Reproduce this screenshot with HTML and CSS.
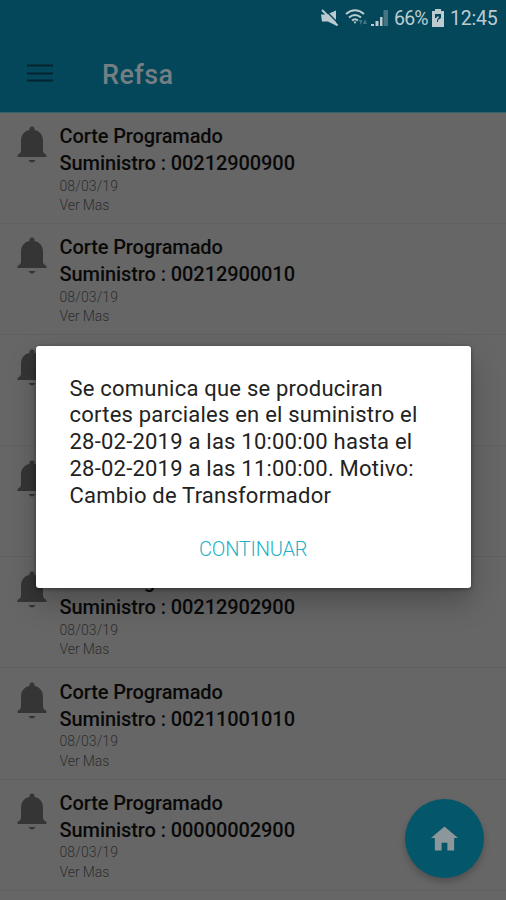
FILE: index.html
```html
<!DOCTYPE html>
<html lang="es">
<head>
<meta charset="utf-8">
<title>Refsa</title>
<link rel="stylesheet" href="styles.css">
</head>
<body>
<svg class="defs" width="0" height="0"><symbol id="bell" viewBox="0 0 30 37"><path d="M15 .5a2.500 2.500 0 0 0-2.500 2.500v1C7 5 4 9.500 4 15v9.500c0 2-1 3-3.500 4.500v2h29v-2C27 27.500 26 26.500 26 24.500V15c0-5.500-3-10-8.500-11V3A2.500 2.500 0 0 0 15 .5zM11.500 34h7q-1.500 2.500-3.500 2.500t-3.500-2.500z"/></symbol></svg>
<div class="screen">
  <header class="header">
    <div class="status">
      <svg class="mute" viewBox="0 0 18 18"><path d="M0 5.500h6l9-4v15l-8-4H1z"/><path class="cut" d="M3 0l16 16"/><path class="slash" d="M1 1l15.500 15.500"/></svg>
      <svg class="wifi" viewBox="0 0 24 18"><path class="arc" d="M1 5q9-7.500 18 0M4 8.500q6-5 12 0M7 11.500q3-2.500 6 0"/><path d="M8.500 12.500h3L10 15z"/><path class="dim" d="M14 11h3.500l-1.750 5zM18 15l2-5 2 5z"/></svg>
      <svg class="signal" viewBox="0 0 18 18"><path d="M1 15h3v2H1zM5.500 12h3v5h-3z"/><path d="M10 8h2.500v9H10z"/><path class="dim" d="M13.500 1H18v16h-4.500z"/></svg>
      <span class="percent">66%</span>
      <svg class="battery" viewBox="0 0 12 18"><path d="M3 0h6v2h3v16H0V2h3z"/><path class="plug" d="M3 5h6v4l-3 2v2H5v-2l2-3-1-1-2 2H3z"/></svg>
      <span class="clock">12:45</span>
    </div>
    <div class="toolbar">
      <svg class="menu" viewBox="0 0 26 18"><path d="M0 1.500h26M0 9.500h26M0 16.500h26"/></svg>
      <h1>Refsa</h1>
    </div>
  </header>
  <main class="list">
    <article class="row"><svg class="bell"><use href="#bell"/></svg><div><h2>Corte Programado</h2><h3>Suministro : 00212900900</h3><p>08/03/19</p><p>Ver Mas</p></div></article>
    <article class="row"><svg class="bell"><use href="#bell"/></svg><div><h2>Corte Programado</h2><h3>Suministro : 00212900010</h3><p>08/03/19</p><p>Ver Mas</p></div></article>
    <article class="row"><svg class="bell"><use href="#bell"/></svg></article>
    <article class="row"><svg class="bell"><use href="#bell"/></svg></article>
    <article class="row"><svg class="bell"><use href="#bell"/></svg><div><h2>Corte Programado</h2><h3>Suministro : 00212902900</h3><p>08/03/19</p><p>Ver Mas</p></div></article>
    <article class="row"><svg class="bell"><use href="#bell"/></svg><div><h2>Corte Programado</h2><h3>Suministro : 00211001010</h3><p>08/03/19</p><p>Ver Mas</p></div></article>
    <article class="row last"><svg class="bell"><use href="#bell"/></svg><div><h2>Corte Programado</h2><h3>Suministro : 00000002900</h3><p>08/03/19</p><p>Ver Mas</p></div></article>
  </main>
  <button class="fab" aria-label="Inicio"><svg viewBox="0 0 28 26"><path d="M14 0l14 12h-4v13h-7v-8h-6v8H4V12H0z"/></svg></button>
  <section class="dialog">
    <p class="message"><span>Se comunica que se produciran</span><span>cortes parciales en el suministro el</span><span>28-02-2019 a las 10:00:00 hasta el</span><span>28-02-2019 a las 11:00:00. Motivo:</span><span>Cambio de Transformador</span></p>
    <button class="continue">CONTINUAR</button>
  </section>
</div>
</body>
</html>
```
FILE: styles.css
```css
* { box-sizing: border-box; }
body { margin: 0; font-family: Roboto, sans-serif; }
h1, h2, h3, p { margin: 0; white-space: nowrap; }
button { border: 0; padding: 0; font-family: inherit; }
.defs { position: absolute; }
.screen { position: relative; width: 506px; height: 900px; overflow: hidden; background: #666; }
.header { height: 113px; background: #04475a; border-bottom: 1px solid #35616c; }
.status { display: flex; height: 35px; align-items: center; justify-content: flex-end; padding-right: 9px; color: #bccbd0; fill: #bccbd0; font-size: 19.500px; }
.status span { padding-top: 1px; }
.mute { width: 18px; height: 18px; margin-right: 6px; }
.slash { stroke: #bccbd0; stroke-width: 2; }
.cut { stroke: #04475a; stroke-width: 1.500; }
.wifi { width: 24px; height: 18px; margin-right: 1px; }
.arc { fill: none; stroke: #bccbd0; stroke-width: 2; }
.dim { opacity: .35; }
.signal { width: 18px; height: 18px; margin-right: 6px; }
.percent { width: 34px; letter-spacing: -.8px; }
.battery { width: 12px; height: 18px; margin: 0 6px 0 4px; }
.plug { fill: #04475a; }
.clock { width: 47px; letter-spacing: -.2px; }
.toolbar { display: flex; height: 77px; align-items: center; padding-left: 27px; }
.menu { width: 26px; height: 18px; margin: -1px 49px 0 0; stroke: #03242f; stroke-width: 2; }
h1 { color: #747f84; font-size: 27px; line-height: 32px; font-weight: 500; letter-spacing: .4px; padding-top: 3px; }
.row { display: flex; height: 111.1px; padding: 10.400px 0 0 17px; border-bottom: 1px solid #606060; }
.bell { width: 30px; height: 37px; margin: 3px 12.500px 0 0; fill: #353535; }
h2, h3 { color: #090909; font-size: 20px; line-height: 26.700px; font-weight: 500; letter-spacing: -.08px; }
h2 { letter-spacing: -.1px; }
.row p { color: #2d2d2d; font-size: 14px; line-height: 19.300px; font-weight: 300; letter-spacing: .1px; }
.row p:last-child { letter-spacing: -.1px; }
.fab { position: absolute; left: 405px; top: 799px; display: grid; place-items: center; width: 79px; height: 79px; border-radius: 50%; background: #04566b; box-shadow: 0 4px 7px rgba(0,0,0,.22); }
.fab svg { width: 27px; height: 26px; fill: #8b979b; }
.dialog { position: absolute; left: 36px; top: 346px; width: 435px; height: 242px; padding: 29.500px 0 0 33.500px; background: #fff; border-radius: 3px; box-shadow: 0 14px 28px rgba(0,0,0,.25), 0 1px 4px rgba(0,0,0,.4); }
.message { color: #222; font-size: 22px; line-height: 26.800px; letter-spacing: .22px; }
.message span { display: block; }
.continue { display: block; width: 110px; height: 30px; margin: 24.500px 0 0 129.500px; background: transparent; color: #25b0c5; font-size: 20px; line-height: 30px; font-weight: 300; letter-spacing: -.2px; text-align: left; white-space: nowrap; }
```
